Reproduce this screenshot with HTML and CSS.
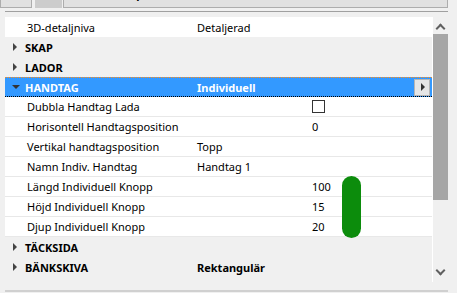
FILE: index.html
```html
<!DOCTYPE html>
<html lang="sv">
<head>
    <meta charset="UTF-8">
    <title>Parametrar</title>
    <link rel="stylesheet" href="styles.css">
</head>
<body>

<div class="toolbar">
    <div class="nav-btn">&#9664;</div>
    <div class="nav-btn off">&#9654;</div>
    <div class="field">
        <svg class="list-icon" width="12" height="10" viewBox="0 0 12 10">
            <rect x="0" y="1" width="2" height="1" fill="#333"/>
            <rect x="3" y="1" width="9" height="1" fill="#333"/>
            <rect x="0" y="4" width="2" height="1" fill="#333"/>
            <rect x="3" y="4" width="9" height="1" fill="#333"/>
            <rect x="0" y="7" width="2" height="1" fill="#333"/>
            <rect x="3" y="7" width="9" height="1" fill="#333"/>
        </svg>
        <span>Minden paraméter</span>
    </div>
</div>
<div class="divider"></div>

<div class="panel">
    <div class="grid">
        <div class="row leaf">
            <span>3D-detaljniva</span>
            <span>Detaljerad</span>
            <span></span>
        </div>
        <div class="row group">
            <span class="arrow"></span>
            <span>SKAP</span>
            <span></span>
        </div>
        <div class="row group">
            <span class="arrow"></span>
            <span>LADOR</span>
            <span></span>
        </div>
        <div class="row group open">
            <span class="arrow down"></span>
            <span>HANDTAG</span>
            <span>Individuell</span>
            <span class="more"><span class="more-tri"></span></span>
        </div>
        <div class="row leaf">
            <span>Dubbla Handtag Lada</span>
            <span></span>
            <span><span class="check"></span></span>
        </div>
        <div class="row leaf">
            <span>Horisontell Handtagsposition</span>
            <span></span>
            <span>0</span>
        </div>
        <div class="row leaf">
            <span>Vertikal handtagsposition</span>
            <span>Topp</span>
            <span></span>
        </div>
        <div class="row leaf">
            <span>Namn Indiv. Handtag</span>
            <span>Handtag 1</span>
            <span></span>
        </div>
        <div class="row leaf">
            <span>Längd Individuell Knopp</span>
            <span></span>
            <span>100</span>
        </div>
        <div class="row leaf">
            <span>Höjd Individuell Knopp</span>
            <span></span>
            <span>15</span>
        </div>
        <div class="row leaf">
            <span>Djup Individuell Knopp</span>
            <span></span>
            <span>20</span>
        </div>
        <div class="row group">
            <span class="arrow"></span>
            <span>TÄCKSIDA</span>
            <span></span>
        </div>
        <div class="row group">
            <span class="arrow"></span>
            <span>BÄNKSKIVA</span>
            <span>Rektangulär</span>
        </div>

        <div class="marker"></div>
    </div>

    <div class="scrollbar">
        <div class="chev up"></div>
        <div class="thumb"></div>
        <div class="chev dn"></div>
    </div>
</div>

<div class="bottom-line"></div>

</body>
</html>
```

FILE: styles.css
```css
body {
    margin: 0;
    background-color: #f0f0f0;
    font-family: "Noto Sans", "Open Sans", sans-serif;
    font-size: 11px;
    color: #000;
    width: 457px;
    height: 293px;
    overflow: hidden;
}

/* top toolbar, scrolled so only the bottom shows */
.toolbar {
    display: flex;
    align-items: flex-end;
    height: 8px;
    overflow: hidden;
}
.nav-btn {
    width: 30px;
    height: 22px;
    margin-right: 3px;
    background-color: #e1e1e1;
    border: 1px solid #adadad;
    font-size: 9px;
    color: #444;
    text-align: center;
    line-height: 16px;
}
.nav-btn.off {
    width: 25px;
    margin-right: 1px;
    background-color: #cccccc;
    border-color: #cccccc;
    color: #999;
}
.field {
    flex: 1;
    height: 22px;
    margin-right: 9px;
    background-color: #e1e1e1;
    border: 1px solid #adadad;
    display: flex;
    align-items: flex-end;
    gap: 8px;
    padding: 0 0 6px 8px;
    box-sizing: border-box;
    font-weight: bold;
}
.list-icon {
    margin-bottom: 1px;
}
.divider {
    margin: 3px 9px 0 5px;
    border-top: 1px solid #a0a0a0;
}

/* property list */
.panel {
    display: flex;
    margin-top: 5px;
    padding-left: 5px;
    height: 265px;
}
.grid {
    position: relative;
    width: 427px;
    border-right: 1px solid #fff;
}
.row {
    display: grid;
    height: 20px;
    box-sizing: border-box;
    align-items: center;
    white-space: nowrap;
}
.leaf {
    grid-template-columns: 170px 115px 1fr;
    padding-left: 22px;
    background-color: #fff;
    border-bottom: 1px solid #e8e8e8;
}
.leaf:first-child {
    border-bottom: none;
}
.group {
    grid-template-columns: 12px 172px 115px 1fr;
    padding-left: 8px;
    background-color: #f0f0f0;
    font-weight: bold;
}
.open {
    background-color: #3399ff;
    color: #fff;
    border-top: 1px dotted #ff8c1a;
    border-bottom: 1px dotted #000;
}
.arrow {
    width: 0;
    height: 0;
    border-top: 4px solid transparent;
    border-bottom: 4px solid transparent;
    border-left: 4px solid #444;
}
.arrow.down {
    border-left: 4px solid transparent;
    border-right: 4px solid transparent;
    border-top: 4px solid #333;
    border-bottom: none;
    margin-left: -1px;
}
.more {
    justify-self: end;
    margin-right: 2px;
    width: 14px;
    height: 15px;
    background-color: #e6e6e6;
    border: 1px solid #b5b5b5;
    display: flex;
    align-items: center;
    justify-content: center;
}
.more-tri {
    width: 0;
    height: 0;
    border-top: 4px solid transparent;
    border-bottom: 4px solid transparent;
    border-left: 4px solid #333;
    margin-left: 2px;
}
.check {
    display: block;
    width: 11px;
    height: 11px;
    border: 1px solid #333;
    background-color: #fff;
}

/* green highlight over the knob rows */
.marker {
    position: absolute;
    left: 337px;
    top: 159px;
    width: 19px;
    height: 62px;
    border-radius: 10px;
    background-color: #0c8c0c;
}

/* scrollbar */
.scrollbar {
    width: 15px;
    position: relative;
}
.thumb {
    position: absolute;
    top: 17px;
    left: 0;
    width: 15px;
    height: 166px;
    background-color: #a6a6a6;
}
.chev {
    position: absolute;
    left: 4px;
    width: 5px;
    height: 5px;
    border-left: 2px solid #606060;
    border-top: 2px solid #606060;
}
.chev.up {
    top: 8px;
    transform: rotate(45deg);
}
.chev.dn {
    top: 250px;
    transform: rotate(225deg);
}

.bottom-line {
    margin: 8px 9px 0 5px;
    border-top: 2px solid #d0d0d0;
}
```
